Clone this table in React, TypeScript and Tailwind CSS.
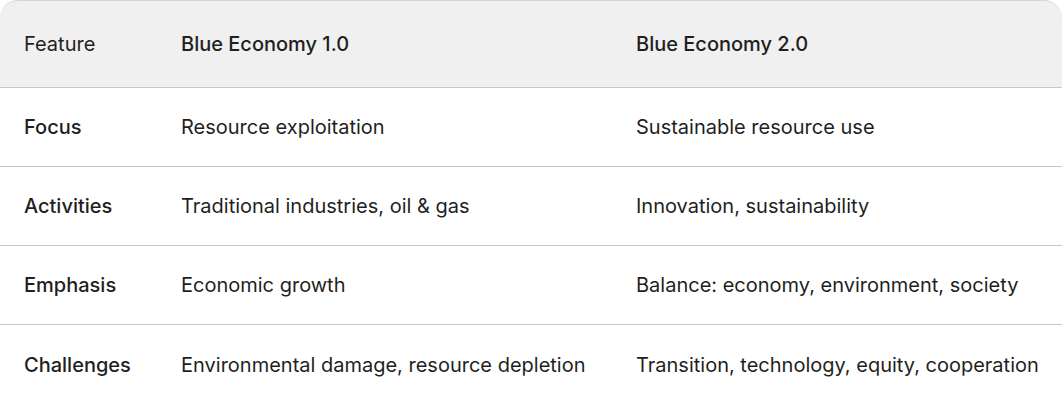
import React from "react";

const rows = [
  { feature: "Focus", one: "Resource exploitation", two: "Sustainable resource use" },
  { feature: "Activities", one: "Traditional industries, oil & gas", two: "Innovation, sustainability" },
  { feature: "Emphasis", one: "Economic growth", two: "Balance: economy, environment, society" },
  { feature: "Challenges", one: "Environmental damage, resource depletion", two: "Transition, technology, equity, cooperation" },
];

export default function App() {
  return (
    <div className="w-[1062px] h-[401px] overflow-hidden bg-white text-[#1f1f1f] font-['Inter','Roboto',sans-serif] text-[20px]">
      <div className="grid grid-cols-[157px_455px_1fr] h-[88px] items-center bg-[#f0f0f0] rounded-t-[18px] border-t border-[#d6d6d6] border-b border-b-[#c7c7c7] font-medium">
        <div className="pl-6 font-normal">Feature</div>
        <div className="pl-6">Blue Economy 1.0</div>
        <div className="pl-6">Blue Economy 2.0</div>
      </div>
      {rows.map((r, i) => (
        <div
          key={i}
          className={
            i < rows.length - 1
              ? "grid grid-cols-[157px_455px_1fr] h-[79px] items-center border-b border-[#c7c7c7]"
              : "grid grid-cols-[157px_455px_1fr] h-[79px] items-center"
          }
        >
          <div className="pl-6 font-medium">{r.feature}</div>
          <div className="pl-6">{r.one}</div>
          <div className="pl-6">{r.two}</div>
        </div>
      ))}
    </div>
  );
}
